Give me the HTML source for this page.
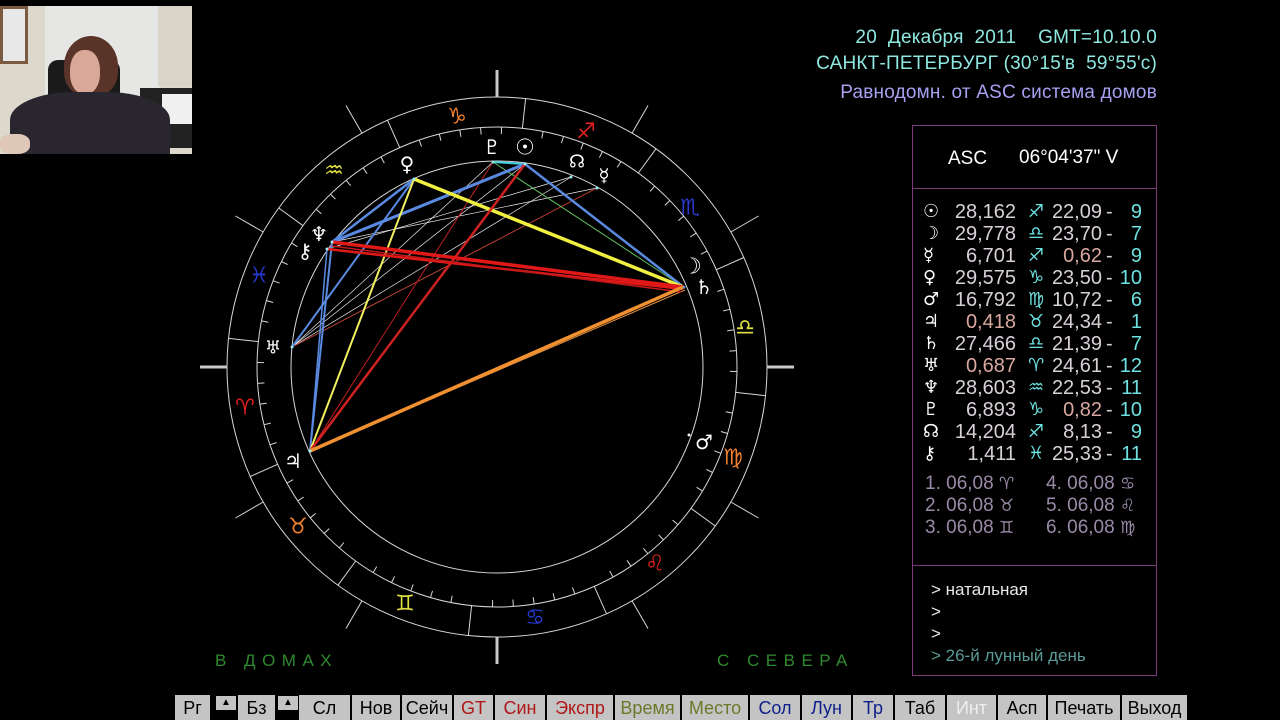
<!DOCTYPE html>
<html><head><meta charset="utf-8"><style>
html,body{margin:0;padding:0;background:#000;width:1280px;height:720px;overflow:hidden;font-family:"Liberation Sans","DejaVu Sans",sans-serif;}
.abs{position:absolute;}
.hdr{position:absolute;right:123px;color:#8ee8e0;font-size:19px;white-space:pre;letter-spacing:0.2px}
#tbl{position:absolute;left:912px;top:125px;width:243px;height:549px;border:1px solid #7a3a7a;}
.row{position:absolute;left:10px;height:22px;font-size:20px;white-space:nowrap;}
.row span{position:absolute;top:0;}
.btn{position:absolute;top:695px;height:25px;background:#c4c4c4;color:#000;font-size:18px;text-align:center;line-height:26px;overflow:hidden;}
</style></head><body>

<div class="abs" style="left:0;top:6px;width:192px;height:148px;background:#ddd8cc;overflow:hidden">
 <div class="abs" style="left:0;top:0;width:22px;height:52px;background:#e8e8e8;border:3px solid #7a5a40"></div>
 <div class="abs" style="left:45px;top:0;width:115px;height:90px;background:#e6e6e4"></div>
 <div class="abs" style="left:158px;top:0;width:34px;height:80px;background:#d8d4c8"></div>
 <div class="abs" style="left:48px;top:54px;width:72px;height:50px;background:#1a1a1a;border-radius:10px"></div>
 <div class="abs" style="left:140px;top:82px;width:52px;height:60px;background:#222"></div>
 <div class="abs" style="left:162px;top:88px;width:30px;height:30px;background:#f0f0f0"></div>
 <div class="abs" style="left:64px;top:30px;width:54px;height:60px;background:#5a3428;border-radius:50% 50% 40% 40%"></div>
 <div class="abs" style="left:70px;top:44px;width:30px;height:44px;background:#d9a898;border-radius:45%"></div>
 <div class="abs" style="left:10px;top:86px;width:160px;height:70px;background:#2a2630;border-radius:40% 40% 0 0"></div>
 <div class="abs" style="left:0;top:128px;width:30px;height:20px;background:#e0c8b8;border-radius:40%"></div>
</div>

<div class="hdr" style="top:27px">20  Декабря  2011    GMT=10.10.0</div>
<div class="hdr" style="top:53px">САНКТ-ПЕТЕРБУРГ (30°15'в  59°55'с)</div>
<div class="hdr" style="top:82px;color:#a8a0f0">Равнодомн. от ASC система домов</div>

<svg class="abs" style="left:0;top:0" width="900" height="690" id="chart">
 <g fill="none" stroke="#d8d8d8" stroke-width="1">
  <circle cx="497" cy="367" r="270"/>
  <circle cx="497" cy="367" r="240"/>
  <circle cx="497" cy="367" r="206"/>
 </g>
 <g id="ticks" stroke="#d8d8d8" stroke-width="1"></g>
 <g stroke="#c8c8c8" stroke-width="3">
  <line x1="200" y1="367" x2="227" y2="367"/><line x1="767" y1="367" x2="794" y2="367"/>
  <line x1="497" y1="70" x2="497" y2="97"/><line x1="497" y1="637" x2="497" y2="664"/>
 </g>
 <g fill="none">
  <line x1="292" y1="347" x2="525" y2="164" stroke="#eee" stroke-width="0.7"/>
  <line x1="292" y1="347" x2="597" y2="188" stroke="#eee" stroke-width="0.7"/>
  <line x1="292" y1="347" x2="493" y2="162" stroke="#eee" stroke-width="0.7"/>
  <line x1="332" y1="242" x2="597" y2="188" stroke="#eee" stroke-width="0.7"/>
  <line x1="327" y1="249" x2="571" y2="177" stroke="#eee" stroke-width="0.7"/>
  <line x1="292" y1="347" x2="571" y2="177" stroke="#eee" stroke-width="0.7"/>
  <line x1="292" y1="347" x2="597" y2="188" stroke="#c03020" stroke-width="0.8"/>
  <line x1="310" y1="451" x2="493" y2="162" stroke="#c02020" stroke-width="1"/>
  <line x1="310" y1="451" x2="685" y2="290" stroke="#e09040" stroke-width="1"/>
  <line x1="493" y1="162" x2="685" y2="288" stroke="#60c060" stroke-width="1"/>
  <line x1="493" y1="162" x2="525" y2="164" stroke="#40d0e0" stroke-width="2"/>
  <line x1="525" y1="164" x2="685" y2="288" stroke="#5a8ae0" stroke-width="2.5"/>
  <line x1="332" y1="242" x2="525" y2="164" stroke="#5a8ae0" stroke-width="3"/>
  <line x1="332" y1="242" x2="414" y2="179" stroke="#5a8ae0" stroke-width="2.5"/>
  <line x1="414" y1="179" x2="292" y2="347" stroke="#5a8ae0" stroke-width="2"/>
  <line x1="332" y1="242" x2="310" y2="451" stroke="#5a8ae0" stroke-width="2"/>
  <line x1="327" y1="249" x2="310" y2="451" stroke="#5a8ae0" stroke-width="1.5"/>
  <line x1="414" y1="179" x2="310" y2="451" stroke="#f0f060" stroke-width="2"/>
  <line x1="414" y1="179" x2="683" y2="287" stroke="#f0f040" stroke-width="3.5"/>
  <line x1="525" y1="164" x2="310" y2="451" stroke="#d02020" stroke-width="2.5"/>
  <line x1="332" y1="242" x2="683" y2="287" stroke="#e01818" stroke-width="3.5"/>
  <line x1="327" y1="249" x2="683" y2="289" stroke="#e01818" stroke-width="2.5"/>
  <line x1="332" y1="246" x2="681" y2="292" stroke="#c01818" stroke-width="1.5"/>
  <line x1="310" y1="451" x2="683" y2="287" stroke="#f09030" stroke-width="3.5"/>
 </g>
 <g fill="#9ee">
  <circle cx="493" cy="162" r="1.5"/><circle cx="525" cy="164" r="1.5"/><circle cx="414" cy="179" r="1.5"/>
  <circle cx="571" cy="177" r="1.5"/><circle cx="597" cy="188" r="1.5"/><circle cx="332" cy="242" r="1.5"/>
  <circle cx="327" cy="249" r="1.5"/><circle cx="292" cy="347" r="1.5"/><circle cx="310" cy="451" r="1.5"/>
  <circle cx="689" cy="435" r="1.5" fill="#eee"/>
 </g>
 <g fill="#fff" font-family="DejaVu Sans" font-size="20" text-anchor="middle" dominant-baseline="central" font-weight="bold">
  <text x="492" y="147">♇</text><text x="525" y="148" font-size="22">☉</text>
  <text x="577" y="162" font-size="18">☊</text><text x="604" y="176" font-size="18">☿</text>
  <text x="407" y="164">♀</text><text x="319" y="234">♆</text>
  <text x="305" y="251" font-size="20">⚷</text><text x="273" y="348" font-size="18">♅</text>
  <text x="293" y="461">♃</text><text x="692" y="267" font-size="22">☽</text>
  <text x="704" y="287">♄</text><text x="704" y="442">♂</text>
 </g>
 <g font-family="DejaVu Sans" font-size="22" text-anchor="middle" dominant-baseline="central" font-weight="bold">
  <text x="457" y="117" fill="#f08030">♑</text><text x="334" y="171" fill="#e0e040">♒</text>
  <text x="259" y="276" fill="#2838d0">♓</text><text x="245" y="408" fill="#e02020">♈</text>
  <text x="298" y="527" fill="#f08030">♉</text><text x="405" y="604" fill="#e0e040">♊</text>
  <text x="535" y="618" fill="#2838d0">♋</text><text x="655" y="564" fill="#e02020">♌</text>
  <text x="733" y="458" fill="#f08030">♍</text><text x="745" y="328" fill="#e0e040">♎</text>
  <text x="690" y="208" fill="#2838d0">♏</text><text x="586" y="132" fill="#e02020">♐</text>
 </g>
 <text x="215" y="666" fill="#2e8a2e" font-size="17" letter-spacing="6.5">В ДОМАХ</text>
 <text x="717" y="666" fill="#2e8a2e" font-size="17" letter-spacing="6.5">С СЕВЕРА</text>
</svg>

<div id="tbl">
 <div style="position:absolute;left:0;top:62px;width:243px;border-top:1px solid #7a3a7a"></div>
 <div style="position:absolute;left:0;top:439px;width:243px;border-top:1px solid #7a3a7a"></div>
 <div style="position:absolute;left:35px;top:22px;color:#fff;font-size:19px">ASC</div>
 <div style="position:absolute;left:106px;top:21px;color:#fff;font-size:19px">06°04'37" V</div>
 <div id="rows"></div>
 <div style="position:absolute;left:18px;top:453px;font-size:17px;color:#e8e8e8;line-height:22px">&gt; натальная<br>&gt;<br>&gt;<br><span style="color:#5a9a98">&gt; 26-й лунный день</span></div>
</div>

<div id="bar"></div>

<script>
(function(){
 var g=document.getElementById('ticks'),cx=497,cy=367,s='';
 function P(d,r){var a=d*Math.PI/180;return [cx-r*Math.cos(a),cy+r*Math.sin(a)];}
 function L(d,r1,r2){var a=P(d,r1),b=P(d,r2);s+='<line x1="'+a[0].toFixed(1)+'" y1="'+a[1].toFixed(1)+'" x2="'+b[0].toFixed(1)+'" y2="'+b[1].toFixed(1)+'"/>';}
 for(var k=0;k<12;k++){L(k*30-6.08,240,270); if(k%3) L(k*30,270,302);}
 for(var k=0;k<72;k++){if(k%6) L(k*5-6.08,240,233);}
 g.innerHTML=s;
 var rows=[['☉','28,162','♐','22,09',' 9',0,0],['☽','29,778','♎','23,70',' 7',0,0],['☿','6,701','♐','0,62',' 9',0,1],
 ['♀','29,575','♑','23,50','10',0,0],['♂','16,792','♍','10,72',' 6',0,0],['♃','0,418','♉','24,34',' 1',1,0],
 ['♄','27,466','♎','21,39',' 7',0,0],['♅','0,687','♈','24,61','12',1,0],['♆','28,603','♒','22,53','11',0,0],
 ['♇','6,893','♑','0,82','10',0,1],['☊','14,204','♐','8,13',' 9',0,0],['⚷','1,411','♓','25,33','11',0,0]];
 var h='';
 rows.forEach(function(r,i){var t=75+i*22;
  h+='<div class="row" style="top:'+t+'px;width:230px">'+
  '<span style="left:0px;color:#fff;font-family:DejaVu Sans;font-size:18px;font-weight:bold">'+r[0]+'</span>'+
  '<span style="right:137px;color:'+(r[5]?'#d8a8a0':'#d8d0d8')+'">'+r[1]+'</span>'+
  '<span style="left:105px;color:#6ee0e0;font-family:DejaVu Sans;font-size:18px;font-weight:bold">'+r[2]+'</span>'+
  '<span style="right:51px;color:'+(r[6]?'#d8a8a0':'#d8d0d8')+'">'+r[3]+'</span>'+
  '<span style="left:183px;color:#d8d0d8">-</span>'+
  '<span style="right:11px;color:#6ee0e0">'+r[4].replace(' ','')+'</span></div>';});
 var hs=[['1.','♈'],['2.','♉'],['3.','♊'],['4.','♋'],['5.','♌'],['6.','♍']];
 hs.forEach(function(x,i){var c=i<3?0:1,t=347+(i%3)*22,l=c?123:2;
  h+='<div class="row" style="top:'+t+'px;left:'+(10+l)+'px;color:#9a8aa8;font-size:19px">'+x[0]+' 06,08 <span style="position:static;font-family:DejaVu Sans;font-size:17px;font-weight:bold">'+x[1]+'</span></div>';});
 document.getElementById('rows').innerHTML=h;
 var b=[['Рг',175,35,'#000'],['▲',215,20,'#000'],['Бз',238,37,'#000'],['▲',277,20,'#000'],['Сл',299,51,'#000'],['Нов',352,48,'#000'],['Сейч',402,50,'#000'],
 ['GT',454,39,'#b01818'],['Син',495,50,'#b01818'],['Экспр',547,66,'#b01818'],['Время',615,65,'#6a7a2a'],['Место',682,66,'#6a7a2a'],
 ['Сол',750,50,'#10208a'],['Лун',802,49,'#10208a'],['Тр',853,40,'#10208a'],['Таб',895,50,'#000'],['Инт',947,49,'#eee'],
 ['Асп',998,48,'#000'],['Печать',1048,72,'#000'],['Выход',1122,65,'#000']];
 var bh='';b.forEach(function(x){bh+='<div class="btn" style="left:'+x[1]+'px;width:'+x[2]+'px;color:'+x[3]+(x[0]=='▲'?';font-size:10px;line-height:14px;top:695px;height:14px;border:1px solid #000':'')+'">'+x[0]+'</div>';});
 document.getElementById('bar').innerHTML=bh;
})();
</script>
</body></html>
